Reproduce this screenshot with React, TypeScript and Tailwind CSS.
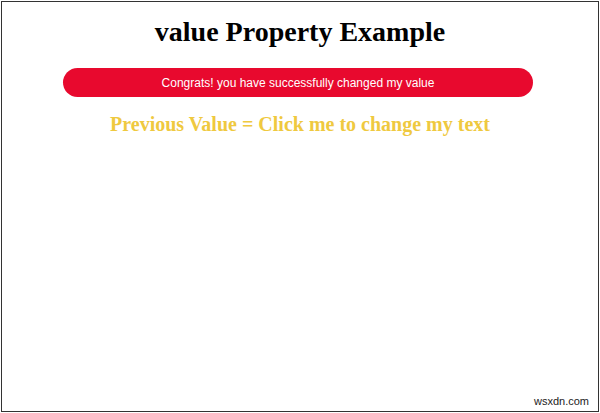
export default function App() {
  return (
    <div className="h-[413px] w-[600px] bg-white p-px">
      <div className="relative flex h-full flex-col items-center border border-[#333] font-['Liberation_Serif',serif]">
        <h1 className="mt-[11px] text-[28px] font-bold leading-[38px] text-black">
          value Property Example
        </h1>
        <button className="mr-[4px] mt-[17px] h-[29px] w-[470px] rounded-full bg-[#e8092e] font-['Liberation_Sans',sans-serif] text-[12px] text-white">
          Congrats! you have successfully changed my value
        </button>
        <p className="mt-[13px] text-[20px] font-bold leading-[28px] text-[#efc93f]">
          Previous Value = Click me to change my text
        </p>
        <span className="absolute bottom-[2px] right-[9px] font-['Liberation_Sans',sans-serif] text-[11px] text-[#222]">
          wsxdn.com
        </span>
      </div>
    </div>
  );
}
